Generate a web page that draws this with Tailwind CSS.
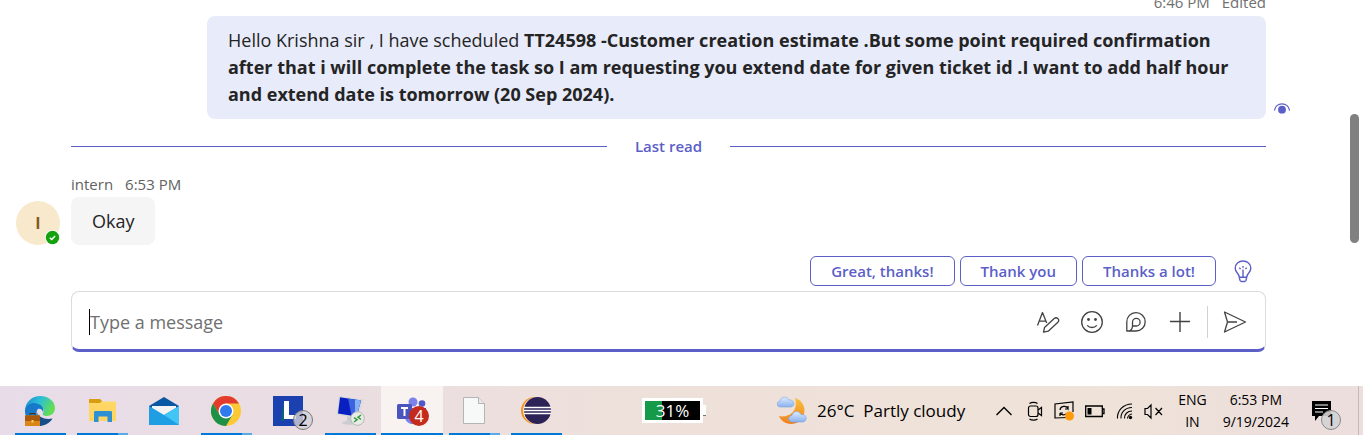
<!doctype html>
<html lang="en">

<head>
    <meta charset="UTF-8" />
    <meta name="viewport" content="width=device-width, initial-scale=1.0" />
    <title>Chat</title>
    <!-- tailwindcss -->
    <script src="https://cdn.jsdelivr.net/npm/@tailwindcss/browser@4"></script>
</head>

<body class="bg-white font-['Open_Sans','Noto_Sans',sans-serif] text-[#242424] min-h-screen flex flex-col">

    <!-- Chat -->
    <main class="flex-1 flex">
        <div class="flex-1 flex flex-col">
            <!-- Own message -->
            <div class="h-4 overflow-hidden flex items-end justify-end gap-3 pb-1 pr-[84px] text-[15px] leading-5 text-[#707070]">
                <span>6:46 PM</span>
                <span>Edited</span>
            </div>
            <div class="flex items-end gap-2 pl-[207px] pr-[60px]">
                <p class="flex-1 bg-[#e8ebfa] rounded-lg pl-[21px] pr-5 py-[11px] text-lg leading-[27px]">
                    Hello Krishna sir , I have scheduled <b class="font-bold">TT24598 -Customer creation estimate .But some point required confirmation after that i will complete the task so I am requesting you extend date for given ticket id .I want to add half hour and extend date is tomorrow (20 Sep 2024).</b>
                </p>
                <svg class="w-4 h-4 shrink-0" viewBox="0 0 16 16" fill="none">
                    <path d="M.5 7.500C1 3.500 4 .8 8 .8s7 2.700 7.500 6.700" stroke="#5b5fc7" stroke-width="1.200" />
                    <circle cx="8" cy="6.700" r="3.900" fill="#5b5fc7" />
                </svg>
            </div>

            <!-- Last read divider -->
            <div class="flex items-center gap-7 mt-[17px] pl-[71px] pr-[84px] text-[15px] leading-5 font-semibold text-[#5b5fc7]">
                <span class="flex-1 h-px bg-[#5b5fc7]"></span>
                <span>Last read</span>
                <span class="flex-1 h-px bg-[#5b5fc7]"></span>
            </div>

            <!-- Reply -->
            <div class="flex items-end gap-[11px] mt-[18px] pl-4">
                <div class="relative w-11 h-11 rounded-full bg-[#f8e9cc] flex items-center justify-center font-bold text-base text-[#835b1e]">
                    I
                    <svg class="absolute right-0 bottom-0 w-[15px] h-[15px]" viewBox="0 0 15 15" fill="none">
                        <circle cx="7.500" cy="7.500" r="7.500" fill="#fff" />
                        <circle cx="7.500" cy="7.500" r="6.700" fill="#13a10e" />
                        <path d="M4.800 7.700l1.900 1.800 3.400-3.600" stroke="#fff" stroke-width="1.500" />
                    </svg>
                </div>
                <div>
                    <div class="flex gap-3 mb-[3px] text-[15px] leading-5 text-[#616161]">
                        <span>intern</span>
                        <span>6:53 PM</span>
                    </div>
                    <p class="w-fit bg-[#f5f5f5] rounded-lg px-[21px] py-[10px] text-lg leading-7">Okay</p>
                </div>
            </div>

            <!-- Suggested replies -->
            <div class="flex justify-end items-center gap-[5px] mt-[11px] pr-[97px] text-[15px] font-semibold text-[#5b5fc7]">
                <button class="h-[30px] px-5 border border-[#5b5fc7] rounded-md">Great, thanks!</button>
                <button class="h-[30px] px-5 border border-[#5b5fc7] rounded-md">Thank you</button>
                <button class="h-[30px] px-5 border border-[#5b5fc7] rounded-md">Thanks a lot!</button>
                <button class="ml-3" aria-label="Suggestions">
                    <svg class="w-5 h-6" viewBox="0 0 20 24" fill="none" stroke="#5b5fc7" stroke-width="1.400">
                        <path d="M6.300 18.200c-.3-2-1-3-2.200-4.400C2.900 12.400 2.200 11 2.200 9.300 2.200 5 5.700 2 10 2s7.800 3 7.800 7.300c0 1.700-.7 3.100-1.900 4.500-1.200 1.400-1.900 2.400-2.200 4.400zM6.300 18.200l.6 3c.2.8.7 1.300 1.500 1.300h3.200c.8 0 1.300-.5 1.500-1.300l.6-3M10 18v-7.500M10 7v1.800M6.300 8.800l1.300 1.300M13.700 8.800l-1.300 1.300" />
                    </svg>
                </button>
            </div>

            <!-- Compose box -->
            <div class="pl-[71px] pr-[84px] mt-[5px] pb-[34px]">
                <div class="flex items-center h-[61px] border border-[#dcdcdc] border-b-[3px] border-b-[#5b5fc7] rounded-lg pl-[17px] pr-[18px] pt-[3px] text-[#424242]">
                    <span class="w-px h-[26px] bg-black"></span>
                    <input type="text" aria-label="Type a message" placeholder="Type a message" class="flex-1 min-w-0 h-10 text-lg placeholder:text-[#707070] outline-none" />
                    <div class="flex items-center gap-5">
                        <button aria-label="Format">
                            <svg class="block w-6 h-6" viewBox="0 0 24 24" fill="none" stroke="currentColor" stroke-width="1.300" stroke-linejoin="round">
                                <path d="M1.500 15.500L6.500 2.500l4.200 10.500M3.300 11.200h6.300M7.500 22.200l1-4.600 9.700-9c1.100-1 2.700-1 3.700 0s1 2.500 0 3.600l-9.700 9z" />
                            </svg>
                        </button>
                        <button aria-label="Emoji">
                            <svg class="block w-6 h-6" viewBox="0 0 24 24" fill="none" stroke="currentColor" stroke-width="1.300">
                                <circle cx="12" cy="12" r="10.300" />
                                <path d="M7.200 15.300c2.400 2.900 7.200 2.900 9.600 0" />
                                <circle cx="8.500" cy="9.500" r="1.400" fill="currentColor" stroke="none" />
                                <circle cx="15.500" cy="9.500" r="1.400" fill="currentColor" stroke="none" />
                            </svg>
                        </button>
                        <button aria-label="Loop">
                            <svg class="block w-6 h-6" viewBox="0 0 24 24" fill="none" stroke="currentColor" stroke-width="1.300" stroke-linejoin="round">
                                <path d="M2.800 21V12a9.200 9.200 0 1 1 9.200 9zM5 21c2.400-1 3.500-2.800 3.500-5v-3.800a3.800 3.800 0 1 1 3.800 3.800H9" />
                            </svg>
                        </button>
                        <button aria-label="Add">
                            <svg class="block w-6 h-6" viewBox="0 0 24 24" fill="none" stroke="currentColor" stroke-width="1.400">
                                <path d="M12 2v20M2 11.500h20" />
                            </svg>
                        </button>
                    </div>
                    <span class="w-px h-8 bg-[#d1d1d1] ml-[15px] mr-[15px]"></span>
                    <button aria-label="Send">
                        <svg class="block w-6 h-6" viewBox="0 0 24 24" fill="none" stroke="currentColor" stroke-width="1.300" stroke-linejoin="round">
                            <path d="M1.500 2l21 10-21 10L4.500 12zM4.500 12H14" />
                        </svg>
                    </button>
                </div>
            </div>
        </div>

        <!-- Scrollbar -->
        <div class="w-[13px] pt-[114px]">
            <div class="w-[9px] h-[129px] rounded-full bg-[#808080]"></div>
        </div>
    </main>

    <!-- Taskbar -->
    <footer class="h-[49px] bg-linear-to-r from-[#e8dce9] via-[#eddfdb] to-[#ecdedc]">
        <div class="h-full flex items-stretch pl-[9px] text-black bg-linear-to-r from-transparent from-20% via-[#f1e5d6]/60 via-82% to-transparent to-95%">
            <button class="w-[62px] flex flex-col items-center justify-between pt-[10px]" aria-label="Edge">
                <svg class="w-[30px] h-[30px]" viewBox="0 0 30 30">
                    <defs>
                        <linearGradient id="edgeTop" x1="0" y1="0" x2="1" y2=".4">
                            <stop offset="0" stop-color="#1b87cf" />
                            <stop offset=".5" stop-color="#2bbfd8" />
                            <stop offset="1" stop-color="#62dd55" />
                        </linearGradient>
                    </defs>
                    <path d="M0 15C0 6 7 0 15.500 0 24 0 30 6 30 12c0 5-4 8-8 8-3 0-5-1-4-3 1.500-3 0-6-3-6C8 11 4 14 4 20c-3-1-4-3-4-5z" fill="url(#edgeTop)" />
                    <path d="M0 14C2 7 9 6 13 8c4 1 6 4 5 8-1-3-3-4-5-3-2 2-2 6 1 10v7C5 30 0 23 0 14z" fill="#1779c9" />
                    <path d="M12 16c1 5 8 8 15.500 6.500C24 28 19 30 14 30z" fill="#174e87" />
                    <path d="M5 19.500v-2h5v2" fill="none" stroke="#4b2c0a" />
                    <path d="M0 19.500h15V30H0z" fill="#d98518" />
                    <path d="M0 19.500h15V25H0z" fill="#a8590c" />
                    <path d="M6.500 24h2v2.500h-2z" fill="#ffd15a" />
                </svg>
                <span class="w-[51px] h-[2px] bg-[#0078d7]"></span>
            </button>
            <button class="w-[62px] flex flex-col items-center justify-between pt-[10px]" aria-label="Files">
                <svg class="w-[30px] h-[30px]" viewBox="0 0 30 30">
                    <path d="M2 3h11l2 2.500h14V25H2z" fill="#ffd867" />
                    <path d="M2 4c0-.6.400-1 1-1h10l2 2-2 2H2z" fill="#d99d12" />
                    <path d="M2 8h27v17H2z" fill="#ffd564" />
                    <path d="M7 26V16.500c0-1 .5-1.500 1.500-1.500h15c1 0 1.500.5 1.500 1.500V26h-4.500v-5.500h-9V26z" fill="#2f90d4" />
                </svg>
                <span class="flex w-[51px] h-[2px]"><span class="flex-1 bg-[#0078d7]"></span><span class="w-[10px] bg-[#5aa9e6]"></span></span>
            </button>
            <button class="w-[62px] flex flex-col items-center justify-between pt-[10px]" aria-label="Mail">
                <svg class="w-[30px] h-[30px]" viewBox="0 0 30 30">
                    <path d="M0 10L15 1l15 9v8H0z" fill="#0a57a4" />
                    <path d="M3 10h24v10H3z" fill="#f3f3f3" />
                    <path d="M0 10l15 9 15-9v19H0z" fill="#1f9ee4" />
                    <path d="M15 19l15-9v19z" fill="#41c5f5" />
                </svg>
            </button>
            <button class="w-[62px] flex flex-col items-center justify-between pt-[10px]" aria-label="Chrome">
                <svg class="w-[30px] h-[30px]" viewBox="0 0 30 30">
                    <circle cx="15" cy="15" r="15" fill="#fcc934" />
                    <path d="M2 7.500A15 15 0 0 1 28 7.500H15L8.500 18.700z" fill="#e33b2e" />
                    <path d="M2 7.500A15 15 0 0 0 15 30l6.500-11.300h-13z" fill="#1e9149" />
                    <circle cx="15" cy="15" r="7.500" fill="#fff" />
                    <circle cx="15" cy="15" r="6" fill="#2f7bed" />
                </svg>
                <span class="flex w-[51px] h-[2px]"><span class="flex-1 bg-[#0078d7]"></span><span class="w-[10px] bg-[#5aa9e6]"></span></span>
            </button>
            <button class="relative w-[62px] flex flex-col items-center pt-[10px]" aria-label="L, 2 notifications">
                <svg class="w-[30px] h-[30px]" viewBox="0 0 30 30">
                    <path d="M0 0h30v30H0z" fill="#1b41b0" />
                    <path d="M8 25l3-20v20z" fill="#0b6573" />
                    <path d="M11 5h5v14h7v4H11z" fill="#fff" />
                </svg>
                <span class="absolute left-[36px] top-6 w-5 h-5 rounded-full border border-[#777] bg-[#d4d2d8]/80 text-base leading-[18px]">2</span>
            </button>
            <button class="w-[62px] flex flex-col items-center justify-between pt-[10px]" aria-label="Remote desktop">
                <svg class="w-[30px] h-[30px]" viewBox="0 0 30 30">
                    <path d="M12 20h7v5c3 1 3 3-1 3.500-5 .5-11 0-11-2 0-1 5-1 5-2.500z" fill="#c9ccd0" />
                    <path d="M4 0l24 3.500-5 19L1.500 18.500z" fill="#d5d8dc" />
                    <path d="M5 1.300l21 3.200-4.500 16L3 17.500z" fill="#0a1fc0" />
                    <path d="M13 2.500l13 2-4.500 16-5-1z" fill="#3b62e0" />
                    <path d="M20 3.600l6 .9-4.500 16-1.500-.3z" fill="#86b0f4" />
                    <circle cx="22.500" cy="22.500" r="6.800" fill="#e9ebe9" stroke="#b4b8b4" />
                    <path d="M19 21.500l3 2.300-3 2.200M26 19l-3 2.300 3 2.200" fill="none" stroke="#2f9e37" stroke-width="1.500" />
                </svg>
                <span class="w-[51px] h-[2px] bg-[#0078d7]"></span>
            </button>
            <button class="relative w-[62px] flex flex-col items-center justify-between pt-[10px] bg-[#f8f2f0]" aria-label="Teams, 4 notifications">
                <svg class="w-[30px] h-[30px]" viewBox="0 0 30 30">
                    <circle cx="16" cy="6" r="4.500" fill="#7b83eb" />
                    <circle cx="25" cy="7.500" r="3.300" fill="#5059c9" />
                    <path d="M19 12h10v8c0 4-6 6-9 3z" fill="#5059c9" />
                    <path d="M8 12h14v10c0 8-12 8-14 0z" fill="#7b83eb" />
                    <rect y="8" width="15" height="15" rx="1.500" fill="#4b53bc" />
                    <path d="M4 12h7M7.500 12v8" stroke="#fff" stroke-width="2" />
                </svg>
                <span class="absolute left-7 top-5 w-5 h-5 rounded-full bg-[#c42b1c] text-white text-base leading-5">4</span>
                <span class="w-full h-[2px] bg-[#0078d7]"></span>
            </button>
            <button class="w-[62px] flex flex-col items-center justify-between pt-[10px]" aria-label="Document">
                <svg class="w-[30px] h-[30px]" viewBox="0 0 30 30">
                    <path d="M4.500 1.500h15l6 6v20h-21z" fill="#f7f8f8" stroke="#b5b5b5" />
                    <path d="M19.500 1.500v6h6" fill="#e8e8e8" stroke="#b5b5b5" />
                </svg>
                <span class="flex w-[51px] h-[2px]"><span class="flex-1 bg-[#0078d7]"></span><span class="w-[10px] bg-[#5aa9e6]"></span></span>
            </button>
            <button class="w-[62px] flex flex-col items-center justify-between pt-[10px]" aria-label="Eclipse">
                <svg class="w-[30px] h-[30px]" viewBox="0 0 30 30">
                    <circle cx="13.500" cy="14.500" r="13.500" fill="#f7941e" />
                    <circle cx="15.500" cy="14.500" r="13.500" fill="#f3e4de" />
                    <circle cx="16.500" cy="14.500" r="13.500" fill="#2c2255" />
                    <path d="M3 11.500h27M3 14.500h27M3 17.500h27" stroke="#fff" stroke-width="1.400" />
                </svg>
                <span class="w-[51px] h-[2px] bg-[#0078d7]"></span>
            </button>

            <!-- Tray -->
            <div class="ml-auto flex items-center">
                <div class="flex items-center mr-[71px]">
                    <div class="w-[61px] h-[25px] border-[3px] border-white bg-linear-to-r from-[#159a49] from-31% to-black to-31% text-white text-[17px] leading-[19px] text-center">31%</div>
                    <span class="w-[3px] h-[11px] bg-white border-b border-b-[#777]"></span>
                </div>
                <svg class="w-[30px] h-[30px] mr-[10px]" viewBox="0 0 30 30">
                    <defs>
                        <linearGradient id="moon" x1="0" y1="0" x2="0" y2="1">
                            <stop offset="0" stop-color="#f8c13c" />
                            <stop offset="1" stop-color="#f08020" />
                        </linearGradient>
                        <linearGradient id="cloud" x1="0" y1="0" x2="0" y2="1">
                            <stop offset="0" stop-color="#dcebff" />
                            <stop offset="1" stop-color="#8ab1ed" />
                        </linearGradient>
                    </defs>
                    <path d="M18 2c7 2 11 9 9 16-2 8-10 12-18 9-3-1-6-4-7-7 8 2 20-3 16-18z" fill="url(#moon)" />
                    <path d="M3.500 11C-1 11-1 5.500 3 5 4 0 10 0 12 4c5-1 7 6 2 7z" fill="url(#cloud)" stroke="#7ba4e4" stroke-width=".6" />
                    <path d="M15.500 26c-5 0-5-6-.5-6.500 1-5 7-5 9-1 6-1 7 6.500 2 7.500z" fill="url(#cloud)" stroke="#7ba4e4" stroke-width=".6" />
                </svg>
                <span class="text-[17px] mr-[29px] whitespace-pre">26°C  Partly cloudy</span>

                <div class="flex items-center gap-[11px] mr-[14px]">
                    <svg class="w-[22px] h-5" viewBox="0 0 22 20" fill="none" stroke="#000" stroke-width="1.400">
                        <path d="M2.500 14L10 6.500l7.500 7.500" />
                    </svg>
                    <svg class="w-4 h-5" viewBox="0 0 16 20" fill="none" stroke="#000" stroke-width="1.200">
                        <rect x="1.500" y="5" width="9.500" height="10.500" rx="2" />
                        <path d="M11 9l3.500-2.500v8L11 12M2.500 2.500c2-1.500 6-1.500 8 0M2.500 18c2 1.500 6 1.500 8 0" />
                    </svg>
                    <svg class="w-5 h-5" viewBox="0 0 20 20" fill="none" stroke="#000" stroke-width="1.200">
                        <path d="M14 16.500L1 17V3l18-2v10M6 9c.5-4 6-5 8-1.500V5M14 8h-3M13 12c-2 3-6 2-7 0v3M6 12h3" />
                        <circle cx="15.500" cy="15" r="4.500" fill="#ff9a0a" stroke="none" />
                    </svg>
                    <svg class="w-5 h-5" viewBox="0 0 20 20" fill="none" stroke="#000" stroke-width="1.300">
                        <path d="M.7 5h16.600v10.500H.7zM17.500 8h1.500v4.500h-1.500" />
                        <path d="M2.500 7h4v6.500h-4z" fill="#000" stroke="none" />
                    </svg>
                    <svg class="w-[17px] h-5" viewBox="0 0 17 20" fill="none" stroke="#000" stroke-width="1.100">
                        <path d="M1.500 17.500C1 10 7 3 16 3M5 17.500C4.500 12 9 6.500 16 6.500M8.500 17.500c-.5-4 3-7.500 7.500-7.500M11.500 17.500c0-2 2-4.500 4.500-4.500" />
                        <circle cx="14.500" cy="16.500" r="1.700" fill="#000" stroke="none" />
                    </svg>
                    <svg class="w-5 h-5" viewBox="0 0 20 20" fill="none" stroke="#000" stroke-width="1.200">
                        <path d="M1 7.500h2.500L7 4v13l-3.500-3.500H1zM11.500 7l6.500 7M18 7l-6.500 7" />
                    </svg>
                </div>

                <div class="text-center text-sm leading-[22px] mr-4">
                    <p>ENG</p>
                    <p>IN</p>
                </div>
                <div class="text-center text-sm leading-[22px] mr-[22px]">
                    <p>6:53 PM</p>
                    <p>9/19/2024</p>
                </div>
                <button class="relative mr-[17px]" aria-label="1 notification">
                    <svg class="block w-[30px] h-[30px]" viewBox="0 0 30 30">
                        <path d="M1 5h19v15H8l-4 5v-5H1z" fill="#000" />
                        <path d="M4 9h13M4 12.500h13M4 16h8" stroke="#fff" stroke-width="1.200" />
                    </svg>
                    <span class="absolute left-[10px] top-[14px] w-5 h-5 rounded-full border border-[#888] bg-[#d4d2d4]/90 text-base leading-[18px]">1</span>
                </button>
                <span class="w-px h-[49px] bg-[#c4b8b8] mr-1"></span>
            </div>
        </div>
    </footer>
    <!-- //END OF Taskbar -->
</body>

</html>
